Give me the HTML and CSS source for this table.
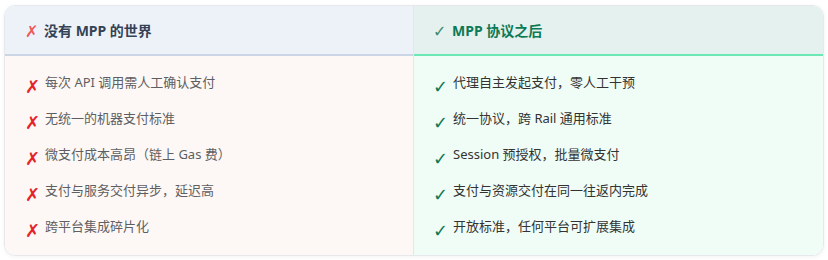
FILE: index.html
```html
<!DOCTYPE html>
<html lang="zh-CN">
<head>
<meta charset="utf-8">
<link rel="stylesheet" href="styles.css">
</head>
<body>
<div class="card">
  <section class="col col-before">
    <header class="col-head"><span class="head-icon">✗</span><span class="head-title">没有 MPP 的世界</span></header>
    <ul class="items">
      <li><span class="mark">✗</span><span class="txt">每次 API 调用需人工确认支付</span></li>
      <li><span class="mark">✗</span><span class="txt">无统一的机器支付标准</span></li>
      <li><span class="mark">✗</span><span class="txt">微支付成本高昂（链上 Gas 费）</span></li>
      <li><span class="mark">✗</span><span class="txt">支付与服务交付异步，延迟高</span></li>
      <li><span class="mark">✗</span><span class="txt">跨平台集成碎片化</span></li>
    </ul>
  </section>
  <section class="col col-after">
    <header class="col-head"><span class="head-icon">✓</span><span class="head-title">MPP 协议之后</span></header>
    <ul class="items">
      <li><span class="mark">✓</span><span class="txt">代理自主发起支付，零人工干预</span></li>
      <li><span class="mark">✓</span><span class="txt">统一协议，跨 Rail 通用标准</span></li>
      <li><span class="mark">✓</span><span class="txt">Session 预授权，批量微支付</span></li>
      <li><span class="mark">✓</span><span class="txt">支付与资源交付在同一往返内完成</span></li>
      <li><span class="mark">✓</span><span class="txt">开放标准，任何平台可扩展集成</span></li>
    </ul>
  </section>
</div>
</body>
</html>
```
FILE: styles.css
```css
* { box-sizing: border-box; }
html, body { margin: 0; background: #ffffff; }
body {
  padding: 5px 4px 4px 4px;
  font-family: "Noto Sans", "Noto Sans CJK SC", sans-serif;
}
.card {
  display: grid;
  grid-template-columns: 409px 1fr;
  border: 1px solid #e6e8ec;
  border-radius: 11px;
  overflow: hidden;
  box-shadow: 0 1px 4px rgba(0,0,0,0.05);
  height: 251px;
}
.col { display: flex; flex-direction: column; }
.col-before { background: #fdf8f5; border-right: 1px solid #e8e6e6; }
.col-after { background: #f0fdf6; }
.col-head {
  height: 50px;
  display: flex;
  align-items: center;
  padding-left: 20px;
  border-bottom: 2px solid;
}
.col-before .col-head { background: #edf2f9; border-bottom-color: #cbd5e6; }
.col-after .col-head { background: #e5f1ee; border-bottom-color: #6ee7b7; padding-left: 19px; }
.head-icon {
  font-family: "DejaVu Sans", sans-serif;
  font-size: 16px;
  width: 19px;
  line-height: 20px;
  padding-top: 4px;
}
.col-before .head-icon { color: #f05a5a; }
.col-after .head-icon { color: #3d8a6c; }
.head-title {
  font-family: "Noto Sans", "Noto Sans CJK SC", sans-serif;
  font-weight: 700;
  font-size: 14px;
}
.col-before .head-title { color: #344256; }
.col-after .head-title { color: #0b7a55; }
.items {
  list-style: none;
  margin: 0;
  padding: 8px 0 0 20px;
}
.col-after .items { padding-left: 19px; }
.items li {
  display: flex;
  align-items: flex-start;
  height: 36px;
  padding-top: 8px;
}
.mark {
  font-family: "DejaVu Sans", sans-serif;
  font-weight: 700;
  font-size: 18px;
  width: 20px;
  margin-top: 5px;
  line-height: 20px;
}
.col-before .mark { color: #e5242a; }
.col-after .mark { color: #0d7a55; }
.txt {
  font-size: 13px;
  line-height: 20px;
}
.col-before .txt { color: #5d5f63; }
.col-after .txt { color: #333333; }
```
